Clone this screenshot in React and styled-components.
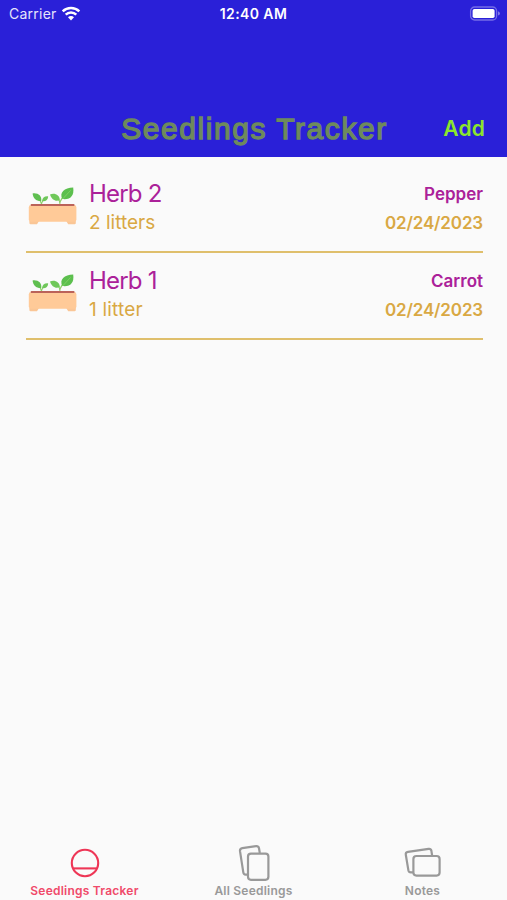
import React from 'react';
import styled, { createGlobalStyle } from 'styled-components';

const seedlings = [
  { id: 2, name: 'Herb 2', amount: '2 litters', plant: 'Pepper', date: '02/24/2023', amountGap: '0px' },
  { id: 1, name: 'Herb 1', amount: '1 litter', plant: 'Carrot', date: '02/24/2023', amountGap: '0.2px' },
];

const WifiIcon = () => (
  <svg width="20" height="16" viewBox="0 0 20 16">
    <path d="M10 14.4 L7 11.3 A4.2 4.2 0 0 1 13 11.3 Z" fill="#fff" />
    <path d="M4.7 8.7 A7.6 7.6 0 0 1 15.3 8.7" fill="none" stroke="#fff" strokeWidth="2.5" />
    <path d="M1.7 5.3 A11.9 11.9 0 0 1 18.3 5.3" fill="none" stroke="#fff" strokeWidth="2.5" />
  </svg>
);

const BatteryIcon = () => (
  <svg width="32" height="16" viewBox="0 0 32 16">
    <rect x="1.6" y="1" width="26" height="13" rx="4" fill="none" stroke="#756ce6" strokeWidth="1.3" />
    <rect x="3.6" y="3" width="22" height="9" rx="1.8" fill="#fff" />
    <path d="M29 5.2 Q31 6 31 7.4 Q31 8.8 29 9.6 Z" fill="#8178e9" />
  </svg>
);

const PlanterIcon = () => (
  <svg width="50" height="40" viewBox="0 0 50 40">
    <path d="M13.4 19 Q13.4 15 18 11.5 M13.4 18 Q12.8 14.5 9 10.5" fill="none" stroke="#8fd06a" strokeWidth="1.1" />
    <path d="M31.6 19 Q31.8 12 41 5.5 M31.8 17 Q32 13 26 10.5" fill="none" stroke="#8fd06a" strokeWidth="1.2" />
    <path d="M4.6 7.4 C10 6.6 14 9.6 13.2 15 C8 15.2 5.2 12.4 4.6 7.4 Z" fill="#5fbf50" />
    <path d="M20.2 10.4 C20 13.8 17.8 15.7 14.2 15.2 C14.2 11.8 16.6 10 20.2 10.4 Z" fill="#6fc75a" />
    <path d="M22 8.4 C27 6.6 31.6 9 31.8 14 C27.6 16 23.8 13.6 22 8.4 Z" fill="#70c85a" />
    <path d="M45.2 1.4 C46.4 9.4 42.5 14 34.4 13 C30.8 6.4 36.4 1.8 45.2 1.4 Z" fill="#5cbf4e" />
    <path d="M34.6 13 L42.6 4.4" stroke="#86d468" strokeWidth="0.8" />
    <path d="M1.4 35 V37 Q1.4 38.2 2.6 38.2 H9 L11 35 Z M47.8 35 V37 Q47.8 38.2 46.6 38.2 H40.2 L38.2 35 Z" fill="#fac696" />
    <rect x="0.8" y="19" width="47.6" height="16.8" rx="2.4" fill="#ffca98" />
    <rect x="2.8" y="18" width="43.6" height="2.1" rx="0.6" fill="#bb6259" />
  </svg>
);

const TrackerIcon = () => (
  <svg width="32" height="32" viewBox="0 0 32 32" fill="none" stroke="#ee3656" strokeWidth="2.1">
    <circle cx="16" cy="16" r="13.2" />
    <path d="M3.8 21.4 H28.2" />
  </svg>
);

const PortraitCardsIcon = () => (
  <svg width="34" height="38" viewBox="0 0 34 38" fill="none" stroke="#999999" strokeWidth="2.2" strokeLinejoin="round">
    <path d="M10.2 30.6 H8.6 Q6.6 30.5 6.3 28.4 L3 7.2 Q2.7 4.6 5.3 4.2 L19 2.2 Q21.4 2 22 4.2 L22.8 9" />
    <rect x="11" y="9.6" width="20.4" height="26.2" rx="3" />
  </svg>
);

const LandscapeCardsIcon = () => (
  <svg width="40" height="38" viewBox="0 0 40 38" fill="none" stroke="#999999" strokeWidth="2.2" strokeLinejoin="round">
    <path d="M10.4 28.3 L7.8 28.4 Q5.8 28.4 5.4 26.4 L2.8 10.8 Q2.4 8.2 5 7.8 L25.6 4.9 Q27.9 4.6 28.4 6.8 L29.2 12" />
    <rect x="10.4" y="12" width="26.2" height="19.6" rx="3" />
  </svg>
);

const App = () => {
  return (
    <Screen>
      <GlobalStyle />
      <Header>
        <StatusBar>
          <Carrier>
            Carrier
            <WifiIcon />
          </Carrier>
          <Clock>12:40 AM</Clock>
          <Battery>
            <BatteryIcon />
          </Battery>
        </StatusBar>
        <NavBar>
          <span />
          <Title>Seedlings Tracker</Title>
          <AddButton>Add</AddButton>
        </NavBar>
      </Header>
      <List>
        {seedlings.map((item) => (
          <Row key={item.id}>
            <PlanterIcon />
            <Details>
              <Name>{item.name}</Name>
              <Amount $gap={item.amountGap}>{item.amount}</Amount>
            </Details>
            <Meta>
              <Plant>{item.plant}</Plant>
              <PlantedOn>{item.date}</PlantedOn>
            </Meta>
          </Row>
        ))}
      </List>
      <TabBar>
        <Tab $active>
          <TabIcon><TrackerIcon /></TabIcon>
          <TabLabel>Seedlings Tracker</TabLabel>
        </Tab>
        <Tab>
          <TabIcon><PortraitCardsIcon /></TabIcon>
          <TabLabel>All Seedlings</TabLabel>
        </Tab>
        <Tab>
          <TabIcon><LandscapeCardsIcon /></TabIcon>
          <TabLabel>Notes</TabLabel>
        </Tab>
      </TabBar>
    </Screen>
  );
};

export default App;

const GlobalStyle = createGlobalStyle`
  * {
    box-sizing: border-box;
  }
  body {
    margin: 0;
    background: #fafafa;
    font-family: Inter, "Liberation Sans", sans-serif;
  }
  svg {
    display: block;
    flex-shrink: 0;
  }
`;

const Screen = styled.div`
  display: flex;
  flex-direction: column;
  height: 100vh;
  background: #fafafa;
`;

const Header = styled.header`
  height: 157px;
  background: #2a20d8;
`;

const StatusBar = styled.div`
  display: grid;
  grid-template-columns: 1fr auto 1fr;
  align-items: center;
  height: 27px;
  padding: 0 6px 0 9px;
  color: #ffffff;
  font-size: 14px;
`;

const Carrier = styled.div`
  display: flex;
  align-items: center;
  gap: 4px;
  color: #e6e4fb;
  letter-spacing: 0.25px;
`;

const Clock = styled.div`
  margin-left: -3px;
  font-weight: 600;
  letter-spacing: 0.4px;
`;

const Battery = styled.div`
  display: flex;
  justify-content: flex-end;
`;

const NavBar = styled.div`
  display: grid;
  grid-template-columns: 1fr auto 1fr;
  align-items: center;
  height: 58px;
  margin-top: 73px;
  padding: 0 22px 0 24px;
`;

const Title = styled.h1`
  margin: 0;
  color: #6e8a5c;
  font-family: "Liberation Sans", Arial, sans-serif;
  font-size: 30px;
  font-weight: 400;
  line-height: 36px;
  letter-spacing: 1.55px;
  white-space: nowrap;
  -webkit-text-stroke: 1.3px #6e8a5c;
`;

const AddButton = styled.button`
  justify-self: end;
  padding: 0;
  border: none;
  background: none;
  color: #8ce62c;
  font-family: inherit;
  font-size: 21px;
  font-weight: 600;
  line-height: 26px;
  letter-spacing: 0.2px;
`;

const List = styled.main`
  flex: 1;
  padding: 9px 24px 0 26px;
`;

const Row = styled.div`
  display: flex;
  align-items: flex-start;
  height: 87px;
  padding: 12px 0 0 2px;
  border-bottom: 2px solid #dfbf6c;

  & > svg {
    margin-top: 8px;
  }
`;

const Details = styled.div`
  flex: 1;
  margin: -1px 0 0 11px;
`;

const Name = styled.div`
  color: #ab2199;
  font-size: 24px;
  line-height: 33px;
  letter-spacing: -0.8px;
`;

const Amount = styled.div`
  color: #d9a843;
  font-size: 19px;
  line-height: 25px;
  letter-spacing: ${(props) => props.$gap};
`;

const Meta = styled.div`
  text-align: right;
  font-size: 17px;
  font-weight: 600;
`;

const Plant = styled.div`
  color: #ab2199;
  line-height: 33px;
`;

const PlantedOn = styled.div`
  color: #d9a843;
  line-height: 25px;
  letter-spacing: -0.15px;
`;

const TabBar = styled.nav`
  display: grid;
  grid-template-columns: repeat(3, 1fr);
  height: 58px;
`;

const Tab = styled.div`
  display: flex;
  flex-direction: column;
  align-items: center;
  color: ${(props) => (props.$active ? '#f04a6a' : '#999999')};
`;

const TabIcon = styled.div`
  display: flex;
  align-items: center;
  height: 41px;
`;

const TabLabel = styled.span`
  font-size: 12px;
  font-weight: 600;
  line-height: 16px;
  letter-spacing: 0.23px;
`;
